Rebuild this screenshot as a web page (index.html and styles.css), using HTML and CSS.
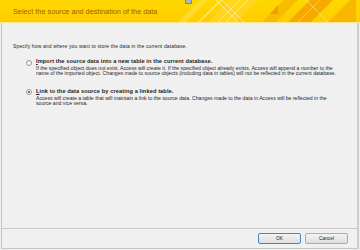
FILE: index.html
```html
<!DOCTYPE html>
<html lang="en">
<head>
    <meta charset="UTF-8">
    <meta name="viewport" content="width=device-width, initial-scale=1.0">
    <title>Get External Data</title>
    <link rel="stylesheet" href="styles.css">
</head>
<body>
    <div class="dialog">
        <div class="banner">
            <h1 class="banner-title">Select the source and destination of the data</h1>
            <svg class="banner-art" width="180" height="22" viewBox="0 0 180 22">
                <polygon points="0,22 22,0 30,0 8,22" fill="#ffe14a" opacity="0.6"/>
                <polygon points="20,22 42,0 44,0 22,22" fill="#fff3a0" opacity="0.7"/>
                <polygon points="30,22 52,0 80,0 58,22" fill="#ffd633" opacity="0.7"/>
                <polyline points="40,22 62,0" stroke="#fff6c0" stroke-width="0.6" fill="none"/>
                <polyline points="48,22 70,0" stroke="#fff6c0" stroke-width="0.6" fill="none"/>
                <polyline points="60,22 38,0" stroke="#fff6c0" stroke-width="0.6" fill="none"/>
                <polyline points="66,22 44,0" stroke="#fff6c0" stroke-width="0.6" fill="none"/>
                <polygon points="84,22 106,0 120,0 98,22" fill="#f7b500" opacity="0.8"/>
                <polygon points="92,14 100,5 100,14" fill="#f29a00" opacity="0.9"/>
                <polygon points="110,22 132,0 155,0 133,22" fill="#f5a300" opacity="0.85"/>
                <polyline points="120,22 142,0" stroke="#ffe680" stroke-width="0.6" fill="none"/>
                <polyline points="150,22 128,0" stroke="#ffe680" stroke-width="0.6" fill="none"/>
                <polygon points="150,22 172,0 178,0 178,22" fill="#f7b000" opacity="0.8"/>
            </svg>
            <span class="banner-icon"></span>
        </div>
        <div class="frame">
            <div class="content">
                <p class="intro">Specify how and where you want to store the data in the current database.</p>
                <div class="option">
                    <span class="radio"></span>
                    <div class="option-text">
                        <div class="option-label"><u>I</u>mport the source data into a new table in the current database.</div>
                        <p class="option-desc">If the specified object does not exist, Access will create it. If the specified object already exists, Access will append a number to the name of the imported object. Changes made to source objects (including data in tables) will not be reflected in the current database.</p>
                    </div>
                </div>
                <div class="option">
                    <span class="radio checked"></span>
                    <div class="option-text">
                        <div class="option-label"><u>L</u>ink to the data source by creating a linked table.</div>
                        <p class="option-desc">Access will create a table that will maintain a link to the source data. Changes made to the data in Access will be reflected in the source and vice versa.</p>
                    </div>
                </div>
            </div>
            <div class="footer">
                <button class="btn btn-default">OK</button>
                <button class="btn">Cancel</button>
            </div>
        </div>
    </div>
</body>
</html>
```

FILE: styles.css
```css
body {
    margin: 0;
    padding: 0;
    background-color: #ffffff;
    font-family: 'Liberation Sans', Arial, sans-serif;
    color: #1e1e1e;
}
.dialog {
    width: 360px;
    height: 250px;
    display: flex;
    flex-direction: column;
    background-color: #f0f0f0;
}
.banner {
    position: relative;
    height: 22px;
    flex-shrink: 0;
    display: flex;
    align-items: center;
    background: linear-gradient(180deg, #ffd800, #ffcc00);
    border-bottom: 1px solid #fbe98a;
    overflow: hidden;
}
.banner-title {
    margin: 0 0 0 13px;
    font-size: 7.3px;
    font-weight: normal;
    color: #a35f00;
    white-space: nowrap;
}
.banner-art {
    position: absolute;
    top: 0;
    right: 2px;
}
.banner-icon {
    position: absolute;
    top: 0;
    left: 185px;
    width: 5px;
    height: 3px;
    background-color: #a9b6c4;
    border: 1px solid #7d8896;
    border-top: none;
}
.frame {
    flex-grow: 1;
    display: flex;
    flex-direction: column;
    margin: 0 1px 1px 1px;
    border-left: 1px solid #c6c6c6;
    border-right: 2px solid #cdcdcd;
    border-bottom: 1px solid #c6c6c6;
}
.content {
    flex-grow: 1;
    padding: 20px 0 0 11px;
}
.intro {
    margin: 0 0 8px 0;
    font-size: 5px;
    letter-spacing: 0.13px;
    line-height: 7px;
}
.option {
    display: flex;
    align-items: flex-start;
    margin-left: 13px;
    margin-bottom: 11px;
}
.radio {
    width: 4px;
    height: 4px;
    margin-top: 1.5px;
    margin-right: 4px;
    flex-shrink: 0;
    border-radius: 50%;
    border: 0.8px solid #9a9a9a;
    background: radial-gradient(circle, #ffffff 30%, #dcdcdc 100%);
}
.radio.checked {
    background: radial-gradient(circle, #2a5fa8 0, #4b86c9 40%, #ffffff 55%, #dcdcdc 100%);
}
.option-label {
    font-size: 5.7px;
    font-weight: bold;
    letter-spacing: 0.08px;
    line-height: 7px;
}
.option-desc {
    margin: 1px 0 0 0;
    width: 305px;
    font-size: 5.15px;
    line-height: 5.4px;
}
.footer {
    height: 19px;
    flex-shrink: 0;
    display: flex;
    align-items: center;
    justify-content: flex-end;
    gap: 4px;
    padding-right: 9px;
    border-top: 1px solid #cacaca;
}
.btn {
    width: 43px;
    height: 11px;
    padding: 0;
    font-family: 'Liberation Sans', Arial, sans-serif;
    font-size: 4.8px;
    color: #1e1e1e;
    border: 1px solid #acacac;
    border-radius: 2px;
    background: linear-gradient(180deg, #f4f4f4, #dedede);
}
.btn-default {
    border-color: #3c8ad0;
}
```
